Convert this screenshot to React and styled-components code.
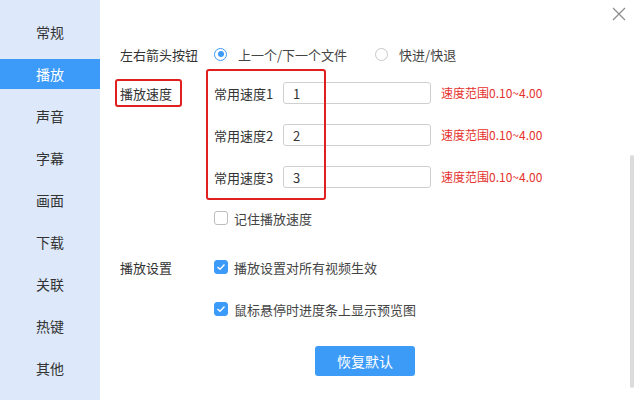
import React from "react";
import styled, { createGlobalStyle } from "styled-components";

const Global = createGlobalStyle`
  html, body { margin: 0; padding: 0; background: #fff; }
  body { font-family: "Noto Sans CJK SC", "Microsoft YaHei", sans-serif; color: #333; }
  * { box-sizing: border-box; }
`;

const Window = styled.div`
  width: 640px;
  height: 400px;
  display: flex;
  overflow: hidden;
  background: #fff;
`;

const Sidebar = styled.nav`
  width: 100px;
  flex: none;
  background: #dde9fb;
  padding-top: 17px;
  display: flex;
  flex-direction: column;
  gap: 12px;
`;

const NavItem = styled.div`
  height: 30px;
  display: flex;
  align-items: center;
  padding-left: 36px;
  font-size: 14px;
  line-height: 1;
  color: ${(p) => (p.$active ? "#fff" : "#333")};
  background: ${(p) => (p.$active ? "#3c9af8" : "transparent")};
`;

const Main = styled.main`
  flex: 1;
  position: relative;
  padding: 43px 0 0 20px;
  font-size: 13px;
  line-height: 1;
`;

const Section = styled.div`
  display: grid;
  grid-template-columns: 94px 1fr;
  margin-top: ${(p) => p.$mt || 0}px;
`;

const SectionLabel = styled.div`
  height: 22px;
  display: flex;
  align-items: center;
  color: #333;
`;

const Stack = styled.div`
  display: flex;
  flex-direction: column;
  gap: ${(p) => p.$gap || 20}px;
`;

const Row = styled.div`
  height: 22px;
  display: flex;
  align-items: center;
  margin-top: ${(p) => p.$mt || 0}px;
`;

const RadioOption = styled.label`
  display: flex;
  align-items: center;
  margin-right: 28px;
  color: #444;
`;

const RadioCircle = styled.span`
  width: 13px;
  height: 13px;
  border-radius: 50%;
  border: 1px solid ${(p) => (p.$on ? "#3c9af8" : "#c8c8c8")};
  display: flex;
  align-items: center;
  justify-content: center;
  margin-right: 11px;
  &::after {
    content: "";
    width: 6px;
    height: 6px;
    border-radius: 50%;
    background: ${(p) => (p.$on ? "#3c9af8" : "transparent")};
  }
`;

const SpeedLabel = styled.span`
  width: 69px;
  color: #333;
`;

const Input = styled.input`
  width: 148px;
  height: 22px;
  border: 1px solid #cfcfcf;
  border-radius: 3px;
  padding: 0 0 0 9px;
  font-family: inherit;
  font-size: 13px;
  color: #333;
  outline: none;
`;

const Hint = styled.span`
  margin-left: 10px;
  font-size: 12px;
  color: #e4312d;
`;

const Box = styled.span`
  width: 14px;
  height: 14px;
  border-radius: 3px;
  flex: none;
  margin-right: 6px;
  display: flex;
  align-items: center;
  justify-content: center;
  background: ${(p) => (p.$on ? "#3c9af8" : "#fff")};
  border: 1px solid ${(p) => (p.$on ? "#3c9af8" : "#bdbdbd")};
`;

const CheckText = styled.span`
  color: #444;
`;

const Footer = styled.div`
  margin-top: 26px;
  padding-left: 195px;
`;

const Button = styled.button`
  width: 100px;
  height: 30px;
  border: none;
  border-radius: 3px;
  background: #3d9bf8;
  color: #fff;
  font-family: inherit;
  font-size: 14px;
`;

const Mark = styled.div`
  position: absolute;
  border: 2.5px solid #e0201f;
  border-radius: 3px;
  pointer-events: none;
`;

const Scrollbar = styled.div`
  position: absolute;
  right: 6px;
  top: 155px;
  width: 4px;
  height: 233px;
  background: #dcdcdc;
  border-radius: 2px;
`;

const Close = styled.svg`
  position: absolute;
  right: 14px;
  top: 7px;
`;

const Check = () => (
  <svg width="10" height="8" viewBox="0 0 10 8">
    <polyline points="1.5,4 4,6.2 8.5,1.5" fill="none" stroke="#fff" strokeWidth="1.4" />
  </svg>
);

const Checkbox = ({ on, children }) => (
  <>
    <Box $on={on}>{on && <Check />}</Box>
    <CheckText>{children}</CheckText>
  </>
);

const nav = ["常规", "播放", "声音", "字幕", "画面", "下载", "关联", "热键", "其他"];

export default function App() {
  return (
    <>
      <Global />
      <Window>
        <Sidebar>
          {nav.map((n) => (
            <NavItem key={n} $active={n === "播放"}>{n}</NavItem>
          ))}
        </Sidebar>
        <Main>
          <Section>
            <SectionLabel>左右箭头按钮</SectionLabel>
            <Row>
              <RadioOption>
                <RadioCircle $on />
                上一个/下一个文件
              </RadioOption>
              <RadioOption>
                <RadioCircle />
                快进/快退
              </RadioOption>
            </Row>
          </Section>

          <Section $mt={17}>
            <SectionLabel>播放速度</SectionLabel>
            <div>
              <Stack $gap={20}>
                {["1", "2", "3"].map((v) => (
                  <Row key={v}>
                    <SpeedLabel>常用速度{v}</SpeedLabel>
                    <Input defaultValue={v} readOnly />
                    <Hint>速度范围0.10~4.00</Hint>
                  </Row>
                ))}
              </Stack>
              <Row $mt={19}>
                <Checkbox>记住播放速度</Checkbox>
              </Row>
            </div>
          </Section>

          <Section $mt={27}>
            <SectionLabel>播放设置</SectionLabel>
            <Stack $gap={20}>
              <Row>
                <Checkbox on>播放设置对所有视频生效</Checkbox>
              </Row>
              <Row>
                <Checkbox on>鼠标悬停时进度条上显示预览图</Checkbox>
              </Row>
            </Stack>
          </Section>

          <Footer>
            <Button>恢复默认</Button>
          </Footer>

          <Mark style={{ left: 15, top: 79, width: 67, height: 28 }} />
          <Mark style={{ left: 106, top: 69, width: 120, height: 131 }} />
          <Scrollbar />
          <Close width="14" height="14" viewBox="0 0 14 14">
            <path d="M1 1 L13 13 M13 1 L1 13" stroke="#8a8a8a" strokeWidth="1.2" />
          </Close>
        </Main>
      </Window>
    </>
  );
}
